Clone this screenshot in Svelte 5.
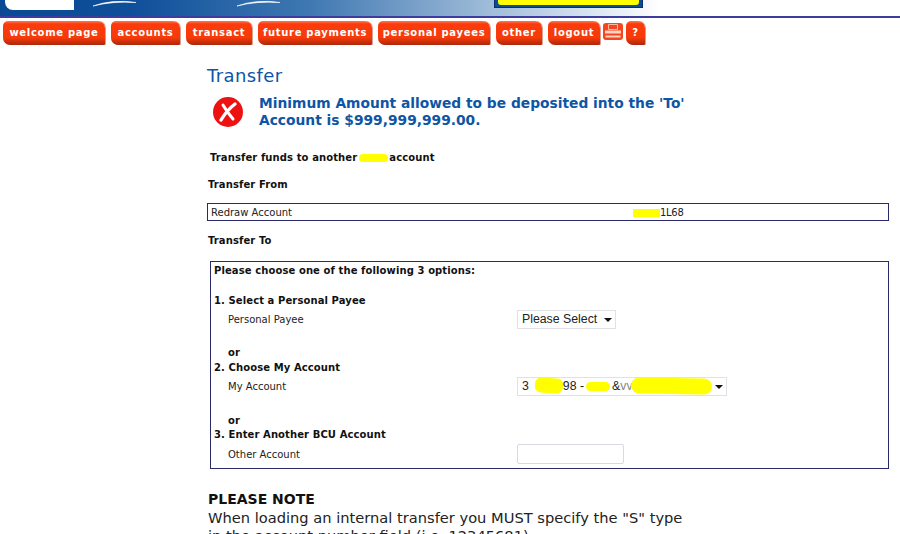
<script>
    let navItems = [
        { label: 'welcome page', width: 102 },
        { label: 'accounts', width: 69 },
        { label: 'transact', width: 66 },
        { label: 'future payments', width: 114 },
        { label: 'personal payees', width: 112 },
        { label: 'other', width: 46 },
        { label: 'logout', width: 52 }
    ];
</script>

<div class="page">
    <header>
        <div class="logo"></div>
        <svg class="swoosh" width="300" height="8" viewBox="0 0 300 8">
            <path d="M93 6 Q112 -1 136 2.5 Q112 1 93 6Z" />
            <path d="M237 6 Q256 -1 280 2.5 Q256 1 237 6Z" />
        </svg>
        <div class="promo"><div class="promo-fill"></div></div>
    </header>

    <nav>
        {#each navItems as item}
            <a href="#top" class="tab" style="width: {item.width}px">{item.label}</a>
        {/each}
        <a href="#top" class="print" aria-label="print">
            <svg width="20" height="17" viewBox="0 0 20 17">
                <rect x="0" y="0" width="20" height="17" rx="3" fill="#f5471f" />
                <path d="M5.5 1.5h9v5h-9z" fill="none" stroke="#ffb8a0" stroke-width="1" />
                <path d="M2 7.5h16v3H2z" fill="#ffd4c4" />
                <path d="M2.5 13.5h15" stroke="#ffd4c4" stroke-width="2" />
            </svg>
        </a>
        <a href="#top" class="tab help">?</a>
    </nav>

    <main>
        <h1>Transfer</h1>

        <div class="error">
            <svg class="error-icon" width="30" height="30" viewBox="0 0 30 30">
                <circle cx="15" cy="15" r="15" fill="#ee1111" />
                <path d="M10 8 Q14 15 20 22" fill="none" stroke="#fff" stroke-width="3" stroke-linecap="round" />
                <path d="M22 7 Q14 13 8 23" fill="none" stroke="#fff" stroke-width="3.4" stroke-linecap="round" />
            </svg>
            <p>Minimum Amount allowed to be deposited into the 'To'<br />Account is $999,999,999.00.</p>
        </div>

        <h2 class="intro">Transfer funds to another <span class="mark bcu"></span> account</h2>

        <h2 class="from-title">Transfer From</h2>
        <div class="from-box">
            <span class="from-name">Redraw Account</span>
            <span class="from-number"><span class="mark acct"></span>1L68</span>
        </div>

        <h2 class="to-title">Transfer To</h2>
        <div class="to-box">
            <h3 class="choose">Please choose one of the following 3 options:</h3>

            <h3 class="option first">1. Select a Personal Payee</h3>
            <div class="row">
                <span>Personal Payee</span>
                <div class="fake-select small">Please Select<i></i></div>
            </div>

            <h3 class="or">or</h3>
            <h3 class="option">2. Choose My Account</h3>
            <div class="row">
                <span>My Account</span>
                <div class="fake-select wide">
                    3<span class="mark m1"></span>98 -<span class="mark m2"></span><span class="amp">&amp;</span><span class="bits">vvo</span><span class="mark m3"></span><i></i>
                </div>
            </div>

            <h3 class="or second">or</h3>
            <h3 class="option">3. Enter Another BCU Account</h3>
            <div class="row last">
                <span>Other Account</span>
                <div class="fake-input"></div>
            </div>
        </div>

        <h4>PLEASE NOTE</h4>
        <p class="note">When loading an internal transfer you MUST specify the "S" type<br />in the account number field (i.e. 12345681)</p>
    </main>
</div>

<style>
    :global(body) {
        background: #fff;
    }

    .page {
        width: 900px;
        height: 534px;
        overflow: hidden;
        font-family: "DejaVu Sans", Verdana, sans-serif;
        color: #222;
    }

    header {
        position: relative;
        height: 16px;
        width: 900px;
        border-bottom: 2px solid #3d3d9f;
        background: linear-gradient(90deg, #0a4a95 0, #0f4f9a 130px, #3f78b2 310px, #a5c0db 500px, #fff 660px);
    }

    .logo {
        position: absolute;
        left: 5px;
        top: 0;
        width: 69px;
        height: 10px;
        background: #fff;
        border-bottom-left-radius: 8px;
    }

    .swoosh {
        position: absolute;
        left: 0;
        top: 0;
    }

    .swoosh path {
        fill: #fff;
        stroke: #fff;
        stroke-width: 0.6;
    }

    .promo {
        position: absolute;
        left: 494px;
        top: 0;
        width: 149px;
        height: 8px;
        box-sizing: border-box;
        background: #0b4c93;
        border: 1px solid #0a2c70;
        border-top: 0;
    }

    .promo-fill {
        margin: 0 3px;
        height: 5px;
        background: #ffff00;
        border-radius: 0 0 3px 3px;
    }

    nav {
        display: flex;
        align-items: flex-start;
        gap: 6px;
        padding: 3px 0 0 3px;
        height: 24px;
    }

    .tab {
        box-sizing: border-box;
        height: 24px;
        text-align: center;
        color: #fff;
        font: bold 10px/23px "DejaVu Sans", Verdana, sans-serif;
        letter-spacing: 0.7px;
        text-decoration: none;
        white-space: nowrap;
        background: linear-gradient(180deg, #ff7a55 0, #fb3b0c 12%, #f73a0a 70%, #c42c08 90%, #a82a10 100%);
        border-radius: 5px 7px 1px 7px;
        box-shadow: 1px 0 0 #d8a090;
    }

    .print {
        display: block;
        margin: 2px 0 0 -3px;
        height: 17px;
    }

    .help {
        width: 19px;
        margin-left: -3px;
    }

    main {
        margin-left: 207px;
    }

    h1 {
        margin: 0;
        padding-top: 19px;
        height: 24px;
        font-size: 18px;
        line-height: 24px;
        letter-spacing: 0.4px;
        font-weight: normal;
        color: #0d55a5;
    }

    .error {
        display: flex;
        align-items: center;
        gap: 16px;
        margin: 7px 0 0 6px;
        height: 34px;
    }

    .error p {
        margin: 0;
        font-size: 13.8px;
        line-height: 17px;
        font-weight: bold;
        color: #0d55a5;
    }

    h2, h3 {
        margin: 0;
        font-size: 10px;
        line-height: 14px;
        letter-spacing: 0.1px;
        font-weight: bold;
        color: #111;
    }

    h2 {
        padding-left: 1px;
    }

    .intro {
        margin: 22px 0 0 2px;
    }

    .mark {
        display: inline-block;
        background: #ffff00;
        border-radius: 6px;
        vertical-align: middle;
    }

    .bcu {
        width: 29px;
        height: 8px;
        margin: 0 -2px;
    }

    .from-title {
        margin-top: 13px;
    }

    .from-box {
        display: flex;
        align-items: center;
        box-sizing: border-box;
        width: 682px;
        height: 18px;
        margin-top: 11px;
        padding-left: 3px;
        border: 1px solid #2a2a6a;
        font-size: 10px;
    }

    .from-name {
        width: 422px;
    }

    .from-number {
        letter-spacing: -0.3px;
    }

    .acct {
        width: 27px;
        height: 8px;
        border-radius: 0;
    }

    .to-title {
        margin-top: 13px;
    }

    .to-box {
        box-sizing: border-box;
        width: 679px;
        height: 208px;
        margin: 13px 0 0 3px;
        padding: 2px 3px;
        border: 1px solid #2a2a6a;
    }

    .option.first {
        margin-top: 16px;
    }

    .row {
        display: flex;
        align-items: center;
        height: 22px;
        padding-left: 14px;
        font-size: 10px;
    }

    .row.last {
        margin-top: 1px;
    }

    .row > span {
        width: 289px;
    }

    .or {
        margin: 16px 0 1px 14px;
    }

    .or.second {
        margin: 17px 0 0 14px;
    }

    .fake-select {
        position: relative;
        box-sizing: border-box;
        height: 19px;
        padding: 0 0 0 4px;
        font: 12.3px/17px "Liberation Sans", Arial, sans-serif;
        color: #222;
        border: 1px solid #dfe0e8;
        white-space: nowrap;
    }

    .fake-select i {
        position: absolute;
        right: 3px;
        top: 7px;
        border: 4px solid transparent;
        border-top-color: #111;
        border-bottom-width: 0;
    }

    .small {
        width: 99px;
    }

    .wide {
        width: 210px;
    }

    .m1 {
        width: 28px;
        height: 15px;
        margin-left: 6px;
        margin-top: -1px;
        transform: rotate(3deg);
    }

    .m2 {
        width: 24px;
        height: 9px;
        margin-left: 2px;
    }

    .amp {
        margin-left: 2px;
    }

    .m3 {
        width: 81px;
        height: 16px;
        margin-left: -8px;
        border-radius: 8px;
        margin-top: -1px;
        transform: rotate(1deg);
    }

    .bits {
        color: #8a8a7a;
    }

    .fake-input {
        box-sizing: border-box;
        width: 107px;
        height: 20px;
        border: 1px solid #d8dae2;
        border-radius: 2px;
    }

    h4 {
        margin: 21px 0 0 1px;
        font-size: 14px;
        line-height: 18px;
        font-weight: bold;
        color: #111;
    }

    .note {
        margin: 1px 0 0 1px;
        font-size: 14.65px;
        line-height: 18px;
        color: #222;
    }
</style>
